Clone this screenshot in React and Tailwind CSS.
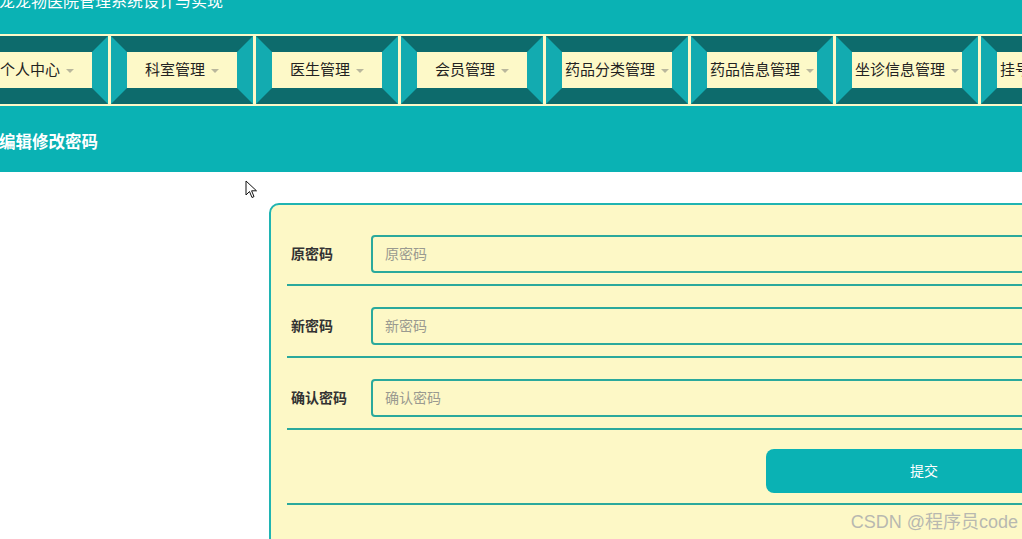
const NAV = ['个人中心', '科室管理', '医生管理', '会员管理', '药品分类管理', '药品信息管理', '坐诊信息管理', '挂号信息管理']

const FIELDS = [
  { label: '原密码', placeholder: '原密码' },
  { label: '新密码', placeholder: '新密码' },
  { label: '确认密码', placeholder: '确认密码' },
]

const NavItem = ({ name }) => (
  <div className="shrink-0 border-[16px] border-t-[#0d6b6c] border-b-[#0d6b6c] border-l-[#13abb0] border-r-[#13abb0]">
    <div className="w-[110px] h-[36px] bg-[#fdf9c8] flex items-center justify-center gap-[6px] text-[15px] text-[#222] whitespace-nowrap">
      <span>{name}</span>
      <span className="shrink-0 w-0 h-0 border-l-[4px] border-r-[4px] border-t-[4px] border-l-transparent border-r-transparent border-t-[#b9b79c] mt-[1px]" />
    </div>
  </div>
)

const App = () => {
  return (
    <div className="relative w-[1022px] h-[539px] overflow-hidden bg-white" style={{ fontFamily: '"Liberation Sans", "Noto Sans CJK SC", sans-serif' }}>
      <div className="h-[172px] bg-[#0ab2b4]">
        <div className="h-[34px] flex items-start">
          <h1 className="-mt-[6px] -ml-[1px] text-[16px] leading-[16px] text-white whitespace-nowrap">宠宠物医院管理系统设计与实现</h1>
        </div>
        <div className="-ml-[34px] flex gap-[3px] py-[2px] bg-[#fdf9c8]">
          {NAV.map((n) => <NavItem key={n} name={n} />)}
        </div>
        <div className="pt-[24px] -ml-[1px] text-[16.5px] leading-[24px] font-bold text-white">编辑修改密码</div>
      </div>

      <div className="pl-[269px] pt-[31px]">
        <div className="w-[900px] h-[400px] rounded-tl-[10px] border-2 border-[#20b4b2] bg-[#fdf8c6] pl-[16px] pt-[9px]">
          {FIELDS.map((f) => (
            <div key={f.label} className="flex items-center pt-[21px] pb-[11px] border-b-2 border-[#2aa99c]">
              <label className="w-[84px] pl-[4px] text-[14px] font-bold text-[#333]">{f.label}</label>
              <input
                type="password"
                placeholder={f.placeholder}
                className="w-[700px] h-[38px] rounded-[4px] border-2 border-[#2aa99c] bg-[#fdf8c6] px-[12px] text-[14px] text-[#333] placeholder:text-[#9a9a90] outline-none"
              />
            </div>
          ))}
          <div className="pt-[19px] pb-[10px] border-b-2 border-[#2aa99c]">
            <button className="ml-[479px] w-[316px] h-[44px] rounded-[8px] bg-[#0ab2b4] text-[14px] text-white">提交</button>
          </div>
        </div>
      </div>

      <svg className="absolute left-[245px] top-[180px]" width="14" height="20" viewBox="0 0 14 20">
        <path d="M1 1 L1 15 L4.5 11.5 L7 17.5 L9 16.6 L6.6 10.8 L11.5 10.8 Z" fill="white" stroke="#111" strokeWidth="1" strokeLinejoin="round" />
      </svg>

      <div className="absolute right-[4px] bottom-[7px] text-[18px] leading-[20px] text-[#b8b8b0] whitespace-nowrap">CSDN @程序员code</div>
    </div>
  )
}

export default App
